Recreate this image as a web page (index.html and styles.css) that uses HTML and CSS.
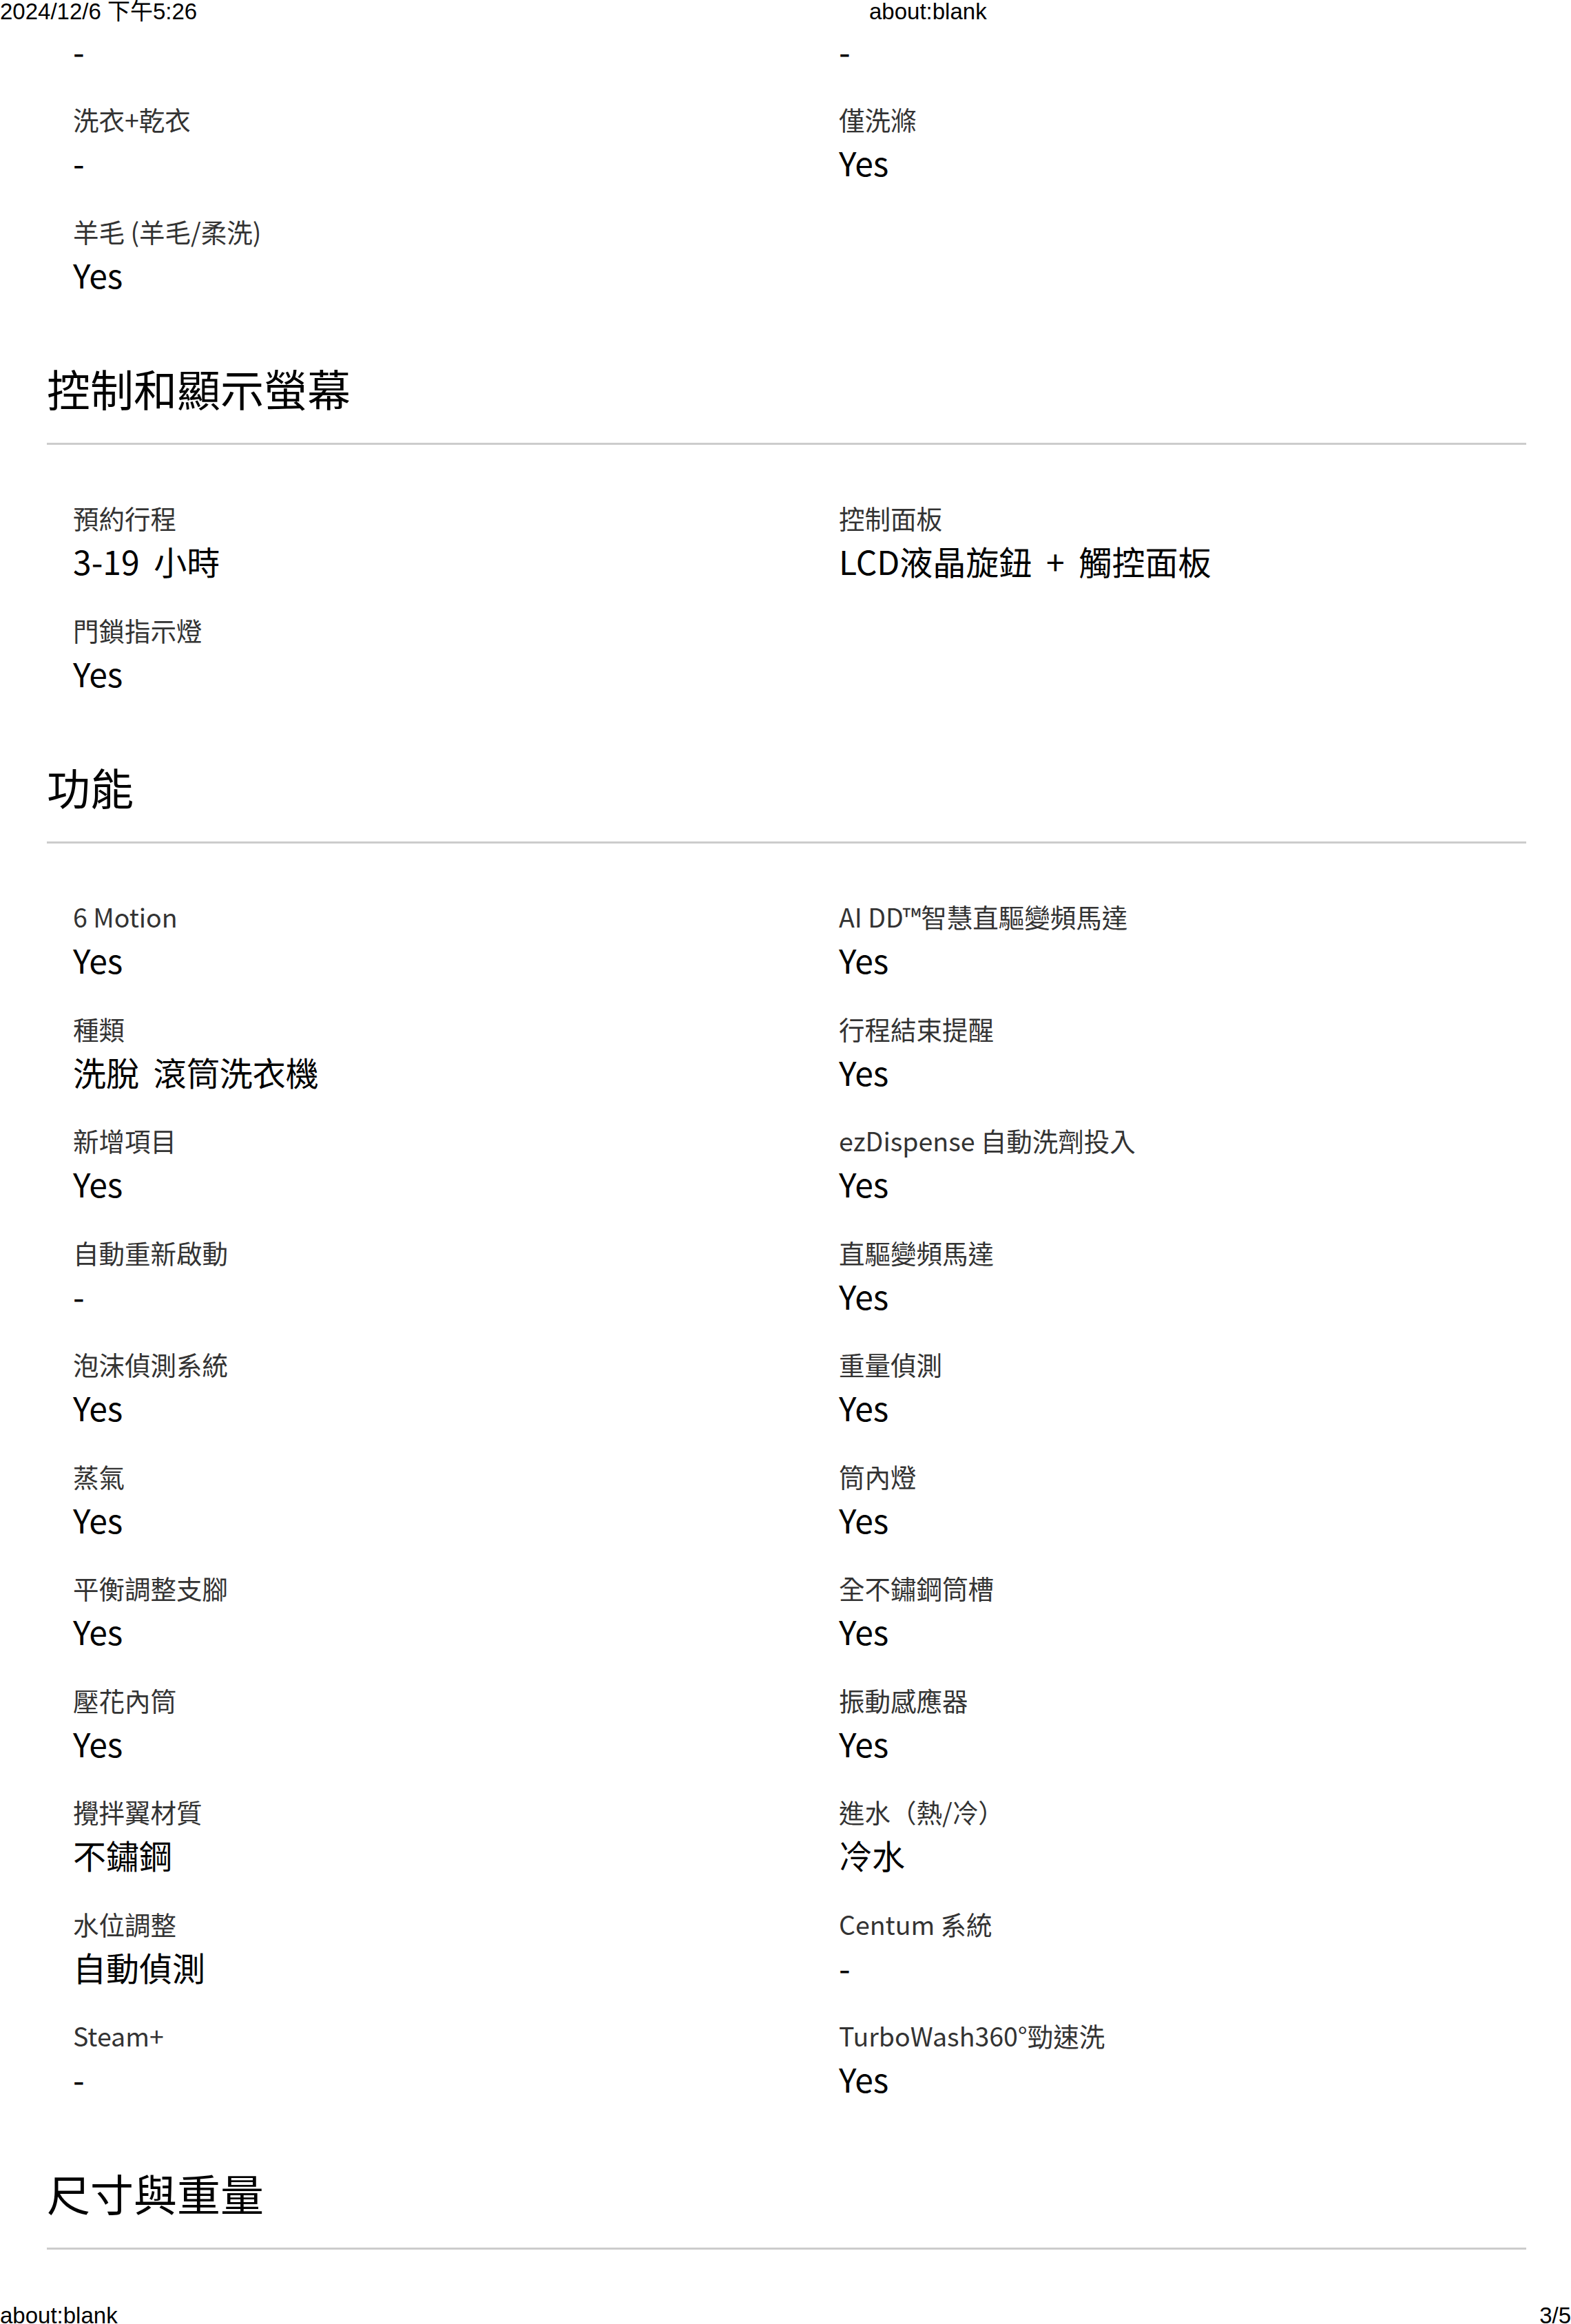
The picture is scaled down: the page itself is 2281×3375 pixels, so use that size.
FILE: index.html
```
<!DOCTYPE html>
<html lang="zh-Hant">
<head>
<meta charset="utf-8">
<title>about:blank</title>
<link rel="stylesheet" href="styles.css">
</head>
<body>
<div class="page">
  <header class="print-head">
    <span class="print-date">2024/12/6 下午5:26</span>
    <span class="print-title">about:blank</span>
  </header>

  <main class="content">
    <div class="spec-grid spec-grid--cont">
      <div class="spec-item"><div class="spec-value">-</div></div>
      <div class="spec-item"><div class="spec-value">-</div></div>
      <div class="spec-item"><div class="spec-label">洗衣+乾衣</div><div class="spec-value">-</div></div>
      <div class="spec-item"><div class="spec-label">僅洗滌</div><div class="spec-value">Yes</div></div>
      <div class="spec-item"><div class="spec-label">羊毛 (羊毛/柔洗)</div><div class="spec-value">Yes</div></div>
    </div>

    <section class="spec-section">
      <h2 class="spec-title">控制和顯示螢幕</h2>
      <div class="spec-grid">
        <div class="spec-item"><div class="spec-label">預約行程</div><div class="spec-value">3-19 小時</div></div>
        <div class="spec-item"><div class="spec-label">控制面板</div><div class="spec-value">LCD液晶旋鈕 + 觸控面板</div></div>
        <div class="spec-item"><div class="spec-label">門鎖指示燈</div><div class="spec-value">Yes</div></div>
      </div>
    </section>

    <section class="spec-section">
      <h2 class="spec-title">功能</h2>
      <div class="spec-grid">
        <div class="spec-item"><div class="spec-label">6 Motion</div><div class="spec-value">Yes</div></div>
        <div class="spec-item"><div class="spec-label">AI DD™智慧直驅變頻馬達</div><div class="spec-value">Yes</div></div>
        <div class="spec-item"><div class="spec-label">種類</div><div class="spec-value">洗脫 滾筒洗衣機</div></div>
        <div class="spec-item"><div class="spec-label">行程結束提醒</div><div class="spec-value">Yes</div></div>
        <div class="spec-item"><div class="spec-label">新增項目</div><div class="spec-value">Yes</div></div>
        <div class="spec-item"><div class="spec-label">ezDispense 自動洗劑投入</div><div class="spec-value">Yes</div></div>
        <div class="spec-item"><div class="spec-label">自動重新啟動</div><div class="spec-value">-</div></div>
        <div class="spec-item"><div class="spec-label">直驅變頻馬達</div><div class="spec-value">Yes</div></div>
        <div class="spec-item"><div class="spec-label">泡沫偵測系統</div><div class="spec-value">Yes</div></div>
        <div class="spec-item"><div class="spec-label">重量偵測</div><div class="spec-value">Yes</div></div>
        <div class="spec-item"><div class="spec-label">蒸氣</div><div class="spec-value">Yes</div></div>
        <div class="spec-item"><div class="spec-label">筒內燈</div><div class="spec-value">Yes</div></div>
        <div class="spec-item"><div class="spec-label">平衡調整支腳</div><div class="spec-value">Yes</div></div>
        <div class="spec-item"><div class="spec-label">全不鏽鋼筒槽</div><div class="spec-value">Yes</div></div>
        <div class="spec-item"><div class="spec-label">壓花內筒</div><div class="spec-value">Yes</div></div>
        <div class="spec-item"><div class="spec-label">振動感應器</div><div class="spec-value">Yes</div></div>
        <div class="spec-item"><div class="spec-label">攪拌翼材質</div><div class="spec-value">不鏽鋼</div></div>
        <div class="spec-item"><div class="spec-label">進水（熱/冷）</div><div class="spec-value">冷水</div></div>
        <div class="spec-item"><div class="spec-label">水位調整</div><div class="spec-value">自動偵測</div></div>
        <div class="spec-item"><div class="spec-label">Centum 系統</div><div class="spec-value">-</div></div>
        <div class="spec-item"><div class="spec-label">Steam+</div><div class="spec-value">-</div></div>
        <div class="spec-item"><div class="spec-label">TurboWash360°勁速洗</div><div class="spec-value">Yes</div></div>
      </div>
    </section>

    <section class="spec-section">
      <h2 class="spec-title">尺寸與重量</h2>
    </section>
  </main>

  <footer class="print-foot">
    <span>about:blank</span>
    <span>3/5</span>
  </footer>
</div>
</body>
</html>
```

FILE: styles.css
```
html, body {
  margin: 0;
  padding: 0;
  background: #ffffff;
}

.page {
  width: 2281px;
  height: 3375px;
  display: flex;
  flex-direction: column;
  overflow: hidden;
}

.print-head {
  height: 36.7px;
  flex: none;
  display: grid;
  grid-template-columns: 1262px auto;
  font-family: "Liberation Sans", "Noto Sans CJK TC", sans-serif;
  font-size: 33px;
  line-height: 33px;
  color: #000;
  white-space: nowrap;
}

.content {
  padding: 0 65px 0 68px;
  font-family: "Noto Sans CJK TC", "Noto Sans", sans-serif;
}

.spec-grid {
  display: grid;
  grid-template-columns: 1fr 1fr;
  column-gap: 152px;
  row-gap: 38.5px;
  padding: 0 38px;
}

.spec-section {
  margin-top: 85.25px;
}

.spec-section .spec-grid {
  padding-top: 80.15px;
}

.spec-title {
  margin: 0;
  font-size: 63px;
  line-height: 88px;
  font-weight: 400;
  color: #000;
  padding-bottom: 36.2px;
  border-bottom: 3px solid #cccccc;
}

.spec-label {
  font-size: 37.5px;
  line-height: 52px;
  color: #333333;
  white-space: nowrap;
}

.spec-value {
  font-size: 48px;
  line-height: 72px;
  color: #000000;
  white-space: nowrap;
  word-spacing: 10px;
}

.print-foot {
  flex: none;
  margin-top: auto;
  margin-bottom: -6px;
  display: flex;
  justify-content: space-between;
  font-family: "Liberation Sans", sans-serif;
  font-size: 33px;
  line-height: 36px;
  color: #000;
}
```
